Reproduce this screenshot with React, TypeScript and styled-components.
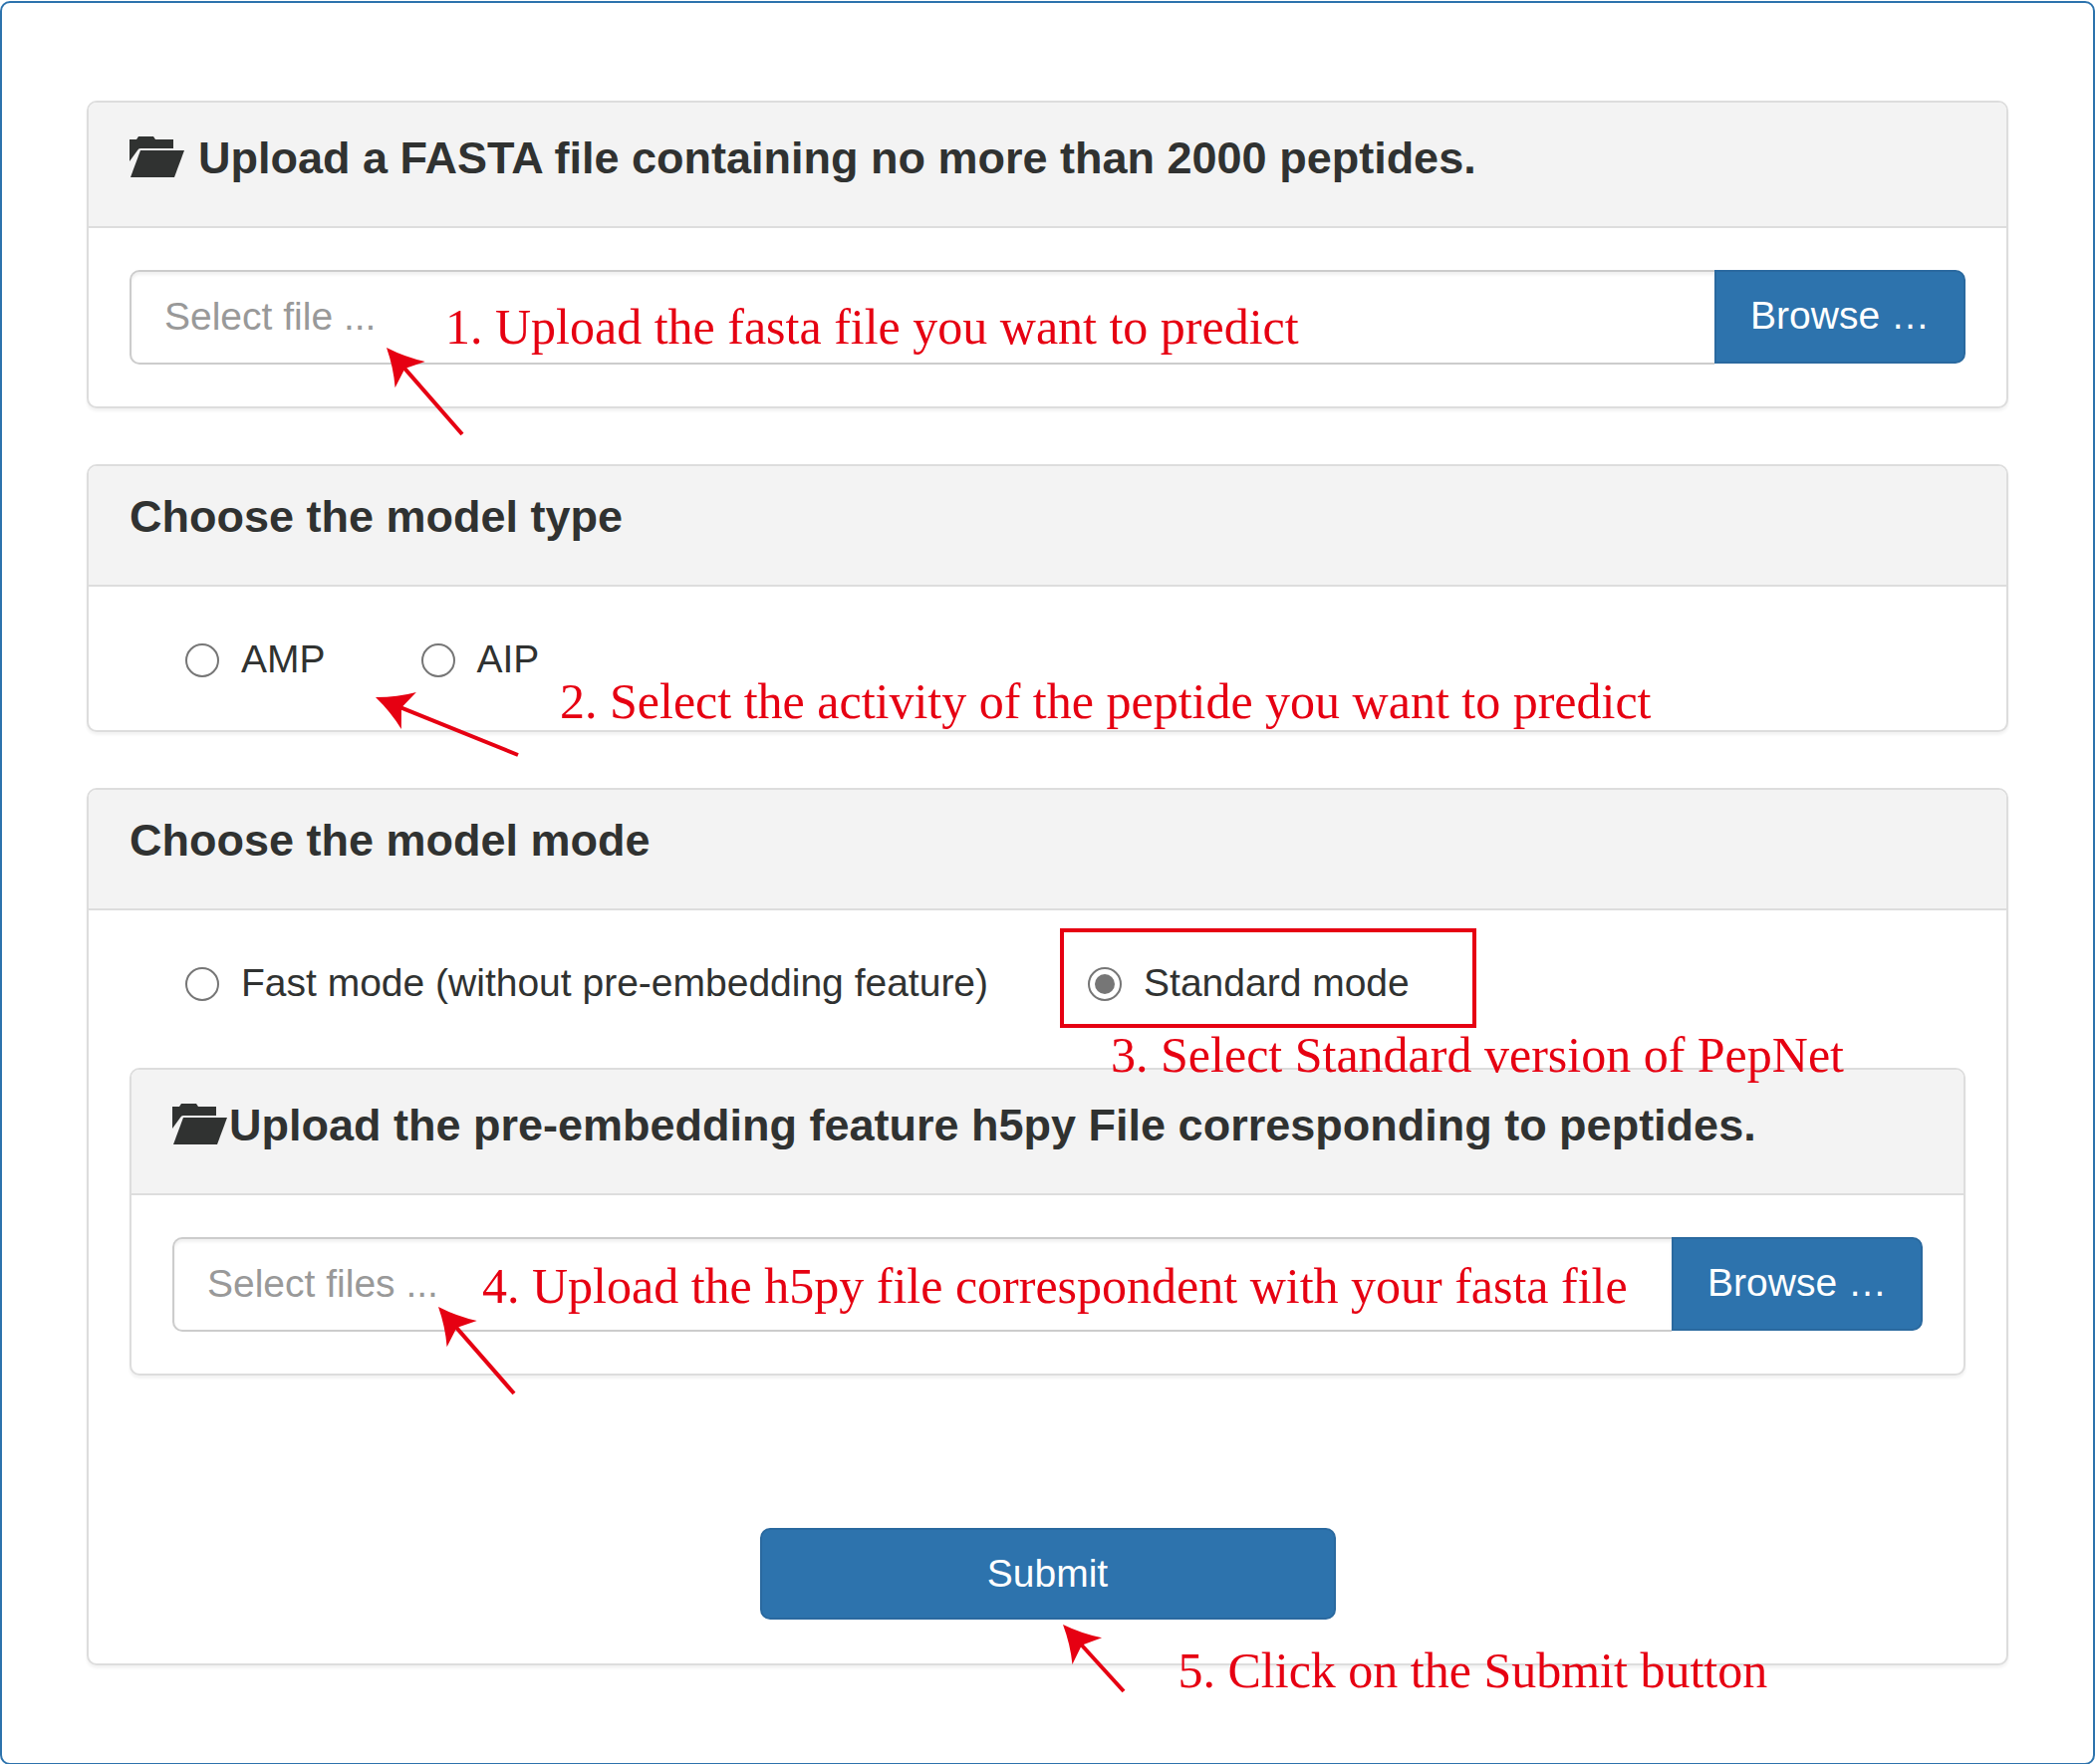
import React, { useId, useState } from "react";
import styled, { createGlobalStyle } from "styled-components";

const color = {
  blue: "#2d73ad",
  blueEdge: "#2a699f",
  red: "#e60012",
  text: "#303231",
  line: "#dddddd",
  field: "#cccccc",
  head: "#f3f3f3",
  muted: "#999999",
  ring: "#767676",
};

const GlobalStyle = createGlobalStyle`
  *, *::before, *::after { box-sizing: border-box; }
  body {
    margin: 0;
    background: #fff;
    color: ${color.text};
    font-family: "Liberation Sans", Arial, sans-serif;
    font-size: 39px;
  }
`;

const Page = styled.main`
  padding-top: 1px;
`;

const Frame = styled.form`
  display: flex;
  flex-direction: column;
  gap: 56px;
  padding: 98px 85px;
  border: 2px solid ${color.blue};
  border-radius: 10px;
`;

const Panel = styled.section`
  position: relative;
  background: #fff;
  border: 2px solid ${color.line};
  border-radius: 10px;
  box-shadow: 0 3px 3px rgba(0, 0, 0, 0.05);
`;

const PanelHead = styled.header<{ $roomy?: boolean }>`
  padding: ${(p) => (p.$roomy ? "31px" : "26px")} 41px 43px;
  background: ${color.head};
  border-bottom: 2px solid ${color.line};
  border-radius: 8px 8px 0 0;
`;

const Title = styled.h2<{ $gap?: boolean }>`
  display: flex;
  align-items: flex-start;
  gap: ${(p) => (p.$gap ? "12px" : "0")};
  margin: 0;
  font-size: 45px;
  line-height: 50px;
  font-weight: 700;
`;

const FolderSvg = styled.svg`
  flex: none;
  width: 57px;
  height: 41px;
  margin-top: 3px;
  fill: currentColor;
`;

const PanelBody = styled.div<{ $choices?: boolean }>`
  padding: ${(p) => (p.$choices ? "46px 41px 44px" : "42px 41px")};
`;

const FileRow = styled.div`
  display: flex;
  align-items: flex-start;
`;

const FileName = styled.input`
  flex: 1;
  min-width: 0;
  height: 95px;
  padding: 0 33px 2px;
  border: 2px solid ${color.field};
  border-right: 0;
  border-radius: 10px 0 0 10px;
  box-shadow: inset 0 3px 3px rgba(0, 0, 0, 0.06);
  background: #fff;
  color: ${color.text};
  font: inherit;
  outline: none;
  &::placeholder {
    color: ${color.muted};
    opacity: 1;
  }
`;

const Button = styled.button`
  border: 2px solid ${color.blueEdge};
  border-radius: 10px;
  background: ${color.blue};
  color: #fff;
  font: inherit;
  cursor: pointer;
`;

const Browse = styled(Button)`
  height: 94px;
  padding: 0 34px 2px;
  border-radius: 0 10px 10px 0;
`;

const Submit = styled(Button)`
  width: 100%;
  height: 92px;
`;

const Choices = styled.div<{ $gap: number }>`
  display: flex;
  flex-wrap: wrap;
  gap: 0 ${(p) => p.$gap}px;
  padding-left: 56px;
`;

const Choice = styled.div`
  position: relative;
  display: flex;
  align-items: center;
  gap: 22px;
  line-height: 54px;
`;

const Radio = styled.input`
  appearance: none;
  flex: none;
  display: grid;
  place-items: center;
  width: 34px;
  height: 34px;
  margin: 2px 0 0;
  border: 2px solid ${color.ring};
  border-radius: 50%;
  &:checked::before {
    content: "";
    width: 20px;
    height: 20px;
    border-radius: 50%;
    background: ${color.ring};
  }
`;

const Nested = styled.div`
  padding-top: 58px;
`;

const SubmitArea = styled.div`
  position: relative;
  width: 100%;
  max-width: 578px;
  margin: 153px auto 0;
`;

/* Tutorial overlay drawn on top of the form */
const Note = styled.p<{ $x: number; $y: number }>`
  position: absolute;
  z-index: 1;
  left: ${(p) => p.$x}px;
  top: ${(p) => p.$y}px;
  margin: 0;
  color: ${color.red};
  font-family: "Liberation Serif", "Times New Roman", serif;
  font-size: 50px;
  line-height: 56px;
  white-space: nowrap;
  pointer-events: none;
`;

const Highlight = styled.span`
  position: absolute;
  left: -28px;
  top: -28px;
  width: 418px;
  height: 100px;
  border: 4px solid ${color.red};
  pointer-events: none;
`;

const ArrowSvg = styled.svg<{ $x: number; $y: number }>`
  position: absolute;
  z-index: 1;
  left: ${(p) => p.$x}px;
  top: ${(p) => p.$y}px;
  overflow: visible;
  pointer-events: none;
`;

/* x, y: the tip; dx, dy: from the tip to the tail */
function Arrow({ x, y, dx, dy }: { x: number; y: number; dx: number; dy: number }) {
  const angle = (Math.atan2(dy, dx) * 180) / Math.PI;
  const length = Math.hypot(dx, dy);
  return (
    <ArrowSvg $x={x} $y={y} width={dx} height={dy} aria-hidden="true">
      <g transform={`rotate(${angle})`} fill={color.red}>
        <path d="M0 0Q20 -8 36 -20L28 0L36 20Q20 8 0 0Z" />
        <rect x="26" y="-2" width={length - 26} height="4" />
      </g>
    </ArrowSvg>
  );
}

function FolderOpen() {
  return (
    <FolderSvg viewBox="0 0 57 41" aria-hidden="true">
      <path d="M0 25V3H7L9 0H24L26 3H44V12H11Q9 12 8 14Z" />
      <path d="M11 14H55L45 41H1Z" />
    </FolderSvg>
  );
}

function FilePicker({ placeholder, label }: { placeholder: string; label: string }) {
  return (
    <FileRow>
      <FileName type="text" readOnly placeholder={placeholder} aria-label={label} />
      <Browse type="button">Browse …</Browse>
    </FileRow>
  );
}

interface OptionProps {
  name: string;
  label: string;
  checked: boolean;
  onSelect: () => void;
  children?: React.ReactNode;
}

function Option({ name, label, checked, onSelect, children }: OptionProps) {
  const id = useId();
  return (
    <Choice>
      <Radio id={id} type="radio" name={name} checked={checked} onChange={onSelect} />
      <label htmlFor={id}>{label}</label>
      {children}
    </Choice>
  );
}

export default function App() {
  const [model, setModel] = useState("");
  const [mode, setMode] = useState("standard");

  return (
    <>
      <GlobalStyle />
      <Page>
        <Frame onSubmit={(e) => e.preventDefault()}>
          <Panel>
            <PanelHead $roomy>
              <Title $gap>
                <FolderOpen />
                Upload a FASTA file containing no more than 2000 peptides.
              </Title>
            </PanelHead>
            <PanelBody>
              <FilePicker placeholder="Select file ..." label="FASTA file" />
            </PanelBody>
            <Note $x={358} $y={197}>1. Upload the fasta file you want to predict</Note>
            <Arrow x={299} y={246} dx={76} dy={87} />
          </Panel>

          <Panel>
            <PanelHead>
              <Title>Choose the model type</Title>
            </PanelHead>
            <PanelBody $choices>
              <Choices $gap={96} role="radiogroup" aria-label="Model type">
                <Option name="model" label="AMP" checked={model === "amp"} onSelect={() => setModel("amp")} />
                <Option name="model" label="AIP" checked={model === "aip"} onSelect={() => setModel("aip")} />
              </Choices>
            </PanelBody>
            <Note $x={473} $y={208}>2. Select the activity of the peptide you want to predict</Note>
            <Arrow x={288} y={232} dx={143} dy={58} />
          </Panel>

          <Panel>
            <PanelHead>
              <Title>Choose the model mode</Title>
            </PanelHead>
            <PanelBody $choices>
              <Choices $gap={100} role="radiogroup" aria-label="Model mode">
                <Option
                  name="mode"
                  label="Fast mode (without pre-embedding feature)"
                  checked={mode === "fast"}
                  onSelect={() => setMode("fast")}
                />
                <Option
                  name="mode"
                  label="Standard mode"
                  checked={mode === "standard"}
                  onSelect={() => setMode("standard")}
                >
                  <Highlight />
                  <Note $x={23} $y={71}>3. Select Standard version of PepNet</Note>
                </Option>
              </Choices>
              <Nested>
                <Panel>
                  <PanelHead $roomy>
                    <Title>
                      <FolderOpen />
                      Upload the pre-embedding feature h5py File corresponding to peptides.
                    </Title>
                  </PanelHead>
                  <PanelBody>
                    <FilePicker placeholder="Select files ..." label="Pre-embedding feature files" />
                  </PanelBody>
                  <Note $x={352} $y={189}>4. Upload the h5py file correspondent with your fasta file</Note>
                  <Arrow x={308} y={238} dx={76} dy={87} />
                </Panel>
              </Nested>
              <SubmitArea>
                <Submit type="submit">Submit</Submit>
                <Note $x={420} $y={115}>5. Click on the Submit button</Note>
                <Arrow x={304} y={97} dx={61} dy={67} />
              </SubmitArea>
            </PanelBody>
          </Panel>
        </Frame>
      </Page>
    </>
  );
}
